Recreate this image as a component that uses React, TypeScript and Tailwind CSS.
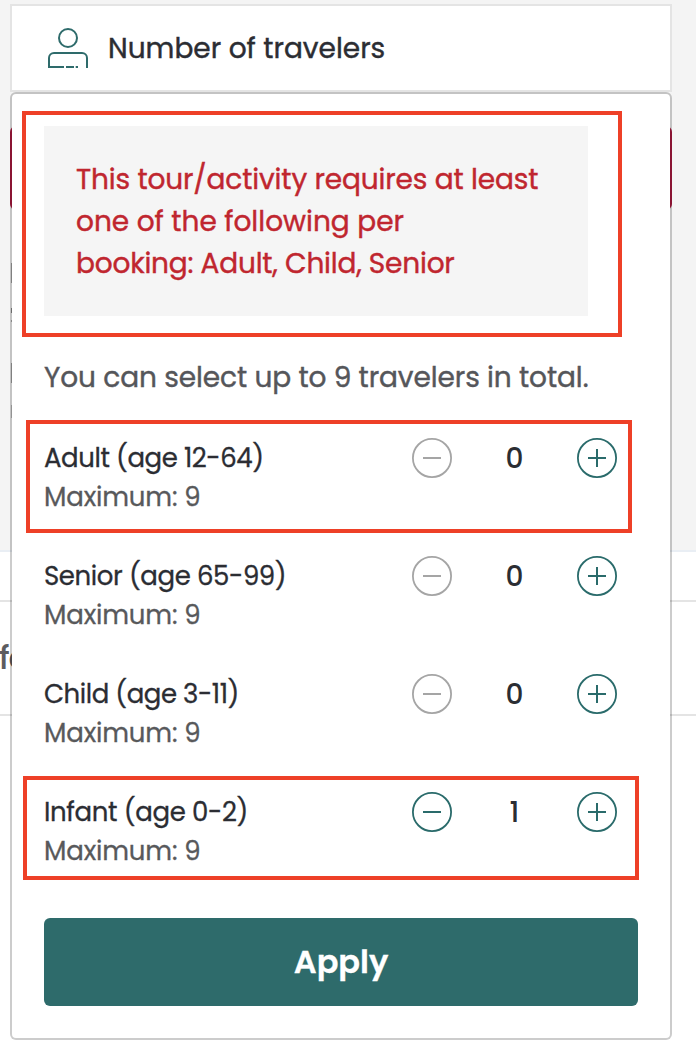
import { useState } from 'react';

type Traveler = { id: string; label: string; tracking: string; initial: number };

const MAX_TOTAL = 9;

const travelers: Traveler[] = [
  { id: 'adult', label: 'Adult (age 12-64)', tracking: 'tracking-[-0.42px]', initial: 0 },
  { id: 'senior', label: 'Senior (age 65-99)', tracking: 'tracking-[-0.4px]', initial: 0 },
  { id: 'child', label: 'Child (age 3-11)', tracking: 'tracking-[-0.45px]', initial: 0 },
  { id: 'infant', label: 'Infant (age 0-2)', tracking: 'tracking-[-0.35px]', initial: 1 },
];

function PersonIcon() {
  return (
    <svg className="h-10 w-10 shrink-0" viewBox="0 0 40 40" fill="none" stroke="#2e6b6b" strokeWidth="2">
      <circle cx="20" cy="10" r="9" />
      <path d="M39 40V30a5 5 0 0 0-5-5H6a5 5 0 0 0-5 5v9h15M18 39h8M27.7 39h2.3" />
    </svg>
  );
}

function StepButton({ kind, disabled, onClick }: { kind: 'minus' | 'plus'; disabled: boolean; onClick: () => void }) {
  return (
    <button
      type="button"
      aria-label={kind}
      disabled={disabled}
      onClick={onClick}
      className={disabled ? 'h-10 w-10 text-[#a5a5a5]' : 'h-10 w-10 text-[#2a6b6b]'}
    >
      <svg className="block h-10 w-10" viewBox="0 0 40 40" fill="none" stroke="currentColor">
        <circle cx="20" cy="20" r="19.1" strokeWidth="1.8" />
        <path d={kind === 'plus' ? 'M11 20h18M20 11v18' : 'M11 20h18'} strokeWidth="2" />
      </svg>
    </button>
  );
}

function PageBackdrop() {
  return (
    <div className="absolute inset-0 flex flex-col bg-white">
      <div className="h-[552px] border-b-2 border-[#e9eef4] bg-[#f4f4f4] pt-[126px] pl-[10px]">
        <div className="h-[84px] w-[662px] rounded-md bg-[#ad1a40]" />
        <div className="mt-[53px] ml-px h-5 w-[3px] bg-[#a0a0a0]" />
        <div className="mt-[25px] ml-px h-[5px] w-[2px] bg-[#888]" />
        <div className="mt-[7px] ml-px h-[2px] w-[2px] bg-[#aaa]" />
        <div className="mt-[41px] ml-px h-5 w-[3px] bg-[#a0a0a0]" />
        <div className="mt-[22px] ml-px h-[13px] w-[3px] bg-[#b8b8b8]" />
      </div>
      <div className="mt-12 flex h-[116px] items-center border-y-2 border-[#e4e4e4]">
        <span className="-ml-px text-[32px] font-medium tracking-[-1px] text-[#5c5c5f]">fe</span>
      </div>
    </div>
  );
}

export default function App() {
  const [counts, setCounts] = useState<Record<string, number>>(
    Object.fromEntries(travelers.map((t) => [t.id, t.initial])),
  );
  const total = Object.values(counts).reduce((a, b) => a + b, 0);
  const step = (id: string, by: number) => setCounts((c) => ({ ...c, [id]: c[id] + by }));

  return (
    <div className="relative h-[1058px] w-[696px] overflow-hidden font-['Poppins','Inter',sans-serif] text-[#2b2d33]">
      <PageBackdrop />

      <div className="relative flex flex-col pt-1 pr-6 pl-[10px]">
        <header className="flex h-[88px] items-center gap-5 border-2 border-[#e4e4e4] bg-white pl-9">
          <PersonIcon />
          <h1 className="pt-0.5 text-[28px] leading-[42px] [-webkit-text-stroke:0.4px]">Number of travelers</h1>
        </header>

        <section className="flex h-[948px] flex-col rounded-md border-2 border-black/20 bg-white bg-clip-padding px-8 pt-8">
          <div className="h-[190px] w-[544px] bg-[#f5f5f5] px-8 pt-[33px] text-[28px] leading-[42px] text-[#c0262f] [-webkit-text-stroke:0.4px]">
            <p className="tracking-[-0.13px]">This tour/activity requires at least</p>
            <p>one of the following per</p>
            <p className="tracking-[-0.2px]">booking: Adult, Child, Senior</p>
          </div>

          <p className="mt-[41px] text-[28px] leading-[42px] tracking-[-0.1px] whitespace-nowrap text-[#55565a] [-webkit-text-stroke:0.4px]">
            You can select up to 9 travelers in total.
          </p>

          <ul className="mt-[39px] flex flex-col gap-10">
            {travelers.map((t) => (
              <li key={t.id} className="flex h-[78px] items-start justify-between pr-[21px]">
                <div className="pt-px text-[26px] leading-[39px] [-webkit-text-stroke:0.3px]">
                  <p className={t.tracking}>{t.label}</p>
                  <p className="tracking-[-0.15px] text-[#58595b]">Maximum: 9</p>
                </div>
                <div className="flex w-[205px] items-center justify-between">
                  <StepButton kind="minus" disabled={counts[t.id] === 0} onClick={() => step(t.id, -1)} />
                  <span className="h-10 w-10 pt-px text-center text-[28px] leading-10 font-medium">{counts[t.id]}</span>
                  <StepButton kind="plus" disabled={total >= MAX_TOTAL} onClick={() => step(t.id, 1)} />
                </div>
              </li>
            ))}
          </ul>

          <button
            type="button"
            className="mt-12 h-[88px] w-[594px] rounded-md bg-[#2e6b6b] text-[32px] leading-[48px] font-semibold text-white [-webkit-text-stroke:0.3px]"
          >
            Apply
          </button>
        </section>
      </div>

      {/* Annotation frames */}
      <div className="pointer-events-none absolute top-[111px] left-[22px] h-[226px] w-[600px] border-4 border-[#ee4027]" />
      <div className="pointer-events-none absolute top-[420px] left-[26px] h-[113px] w-[606px] border-4 border-[#ee4027]" />
      <div className="pointer-events-none absolute top-[776px] left-[23px] h-[104px] w-[616px] border-4 border-[#ee4027]" />
    </div>
  );
}
